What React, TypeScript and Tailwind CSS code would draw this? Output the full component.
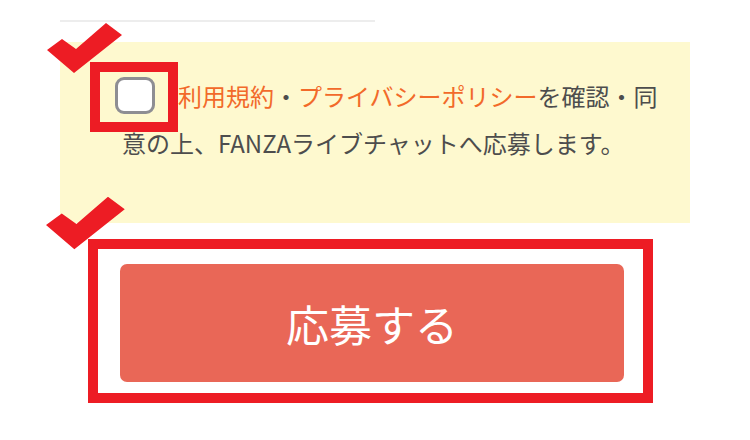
import React from 'react';

const font = { fontFamily: '"Noto Sans CJK JP", "Noto Sans", sans-serif' };

const Check: React.FC<{ className: string }> = ({ className }) => (
  <svg className={className} width="82" height="52" viewBox="0 0 82 52">
    <polygon points="1,27 16,16 30,26 60,0 76,12 28,50" fill="#ed1c24" />
  </svg>
);

export default function App() {
  return (
    <div className="relative h-[440px] w-[750px] overflow-hidden bg-white" style={font}>
      <div className="flex flex-col items-start pl-[60px] pt-[20px]">
        <div className="h-[2px] w-[315px] bg-[#ededed]" />

        <div className="mt-[20px] h-[181px] w-[630px] bg-[#fef9cf] pl-[62px] pr-[26px] pt-[30px]">
          <p className="text-[24px] leading-[47px] text-[#4d4d4d]">
            <span className="-ml-[7px] mr-[23px] inline-block h-[37px] w-[40px] rounded-[9px] border-[3px] border-[#8e8e93] bg-white align-[-8px]" />
            <span className="text-[#f26a2a]">利用規約</span>・<span className="text-[#f26a2a]">プライバシーポリシー</span>を確認・同意の上、FANZAライブチャットへ応募します。
          </p>
        </div>

        <div className="mt-[41px] pl-[60px]">
          <button className="flex h-[118px] w-[504px] items-center justify-center rounded-[7px] bg-[#e96757] text-[43px] text-white">
            応募する
          </button>
        </div>
      </div>

      {/* annotations */}
      <div className="absolute left-[90px] top-[62px] h-[70px] w-[88px] border-[10px] border-[#ed1c24]" />
      <div className="absolute left-[88px] top-[239px] h-[164px] w-[565px] border-[10px] border-[#ed1c24]" />
      <Check className="absolute left-[46px] top-[23px]" />
      <Check className="absolute left-[47px] top-[198px] scale-[1.05]" />
    </div>
  );
}
